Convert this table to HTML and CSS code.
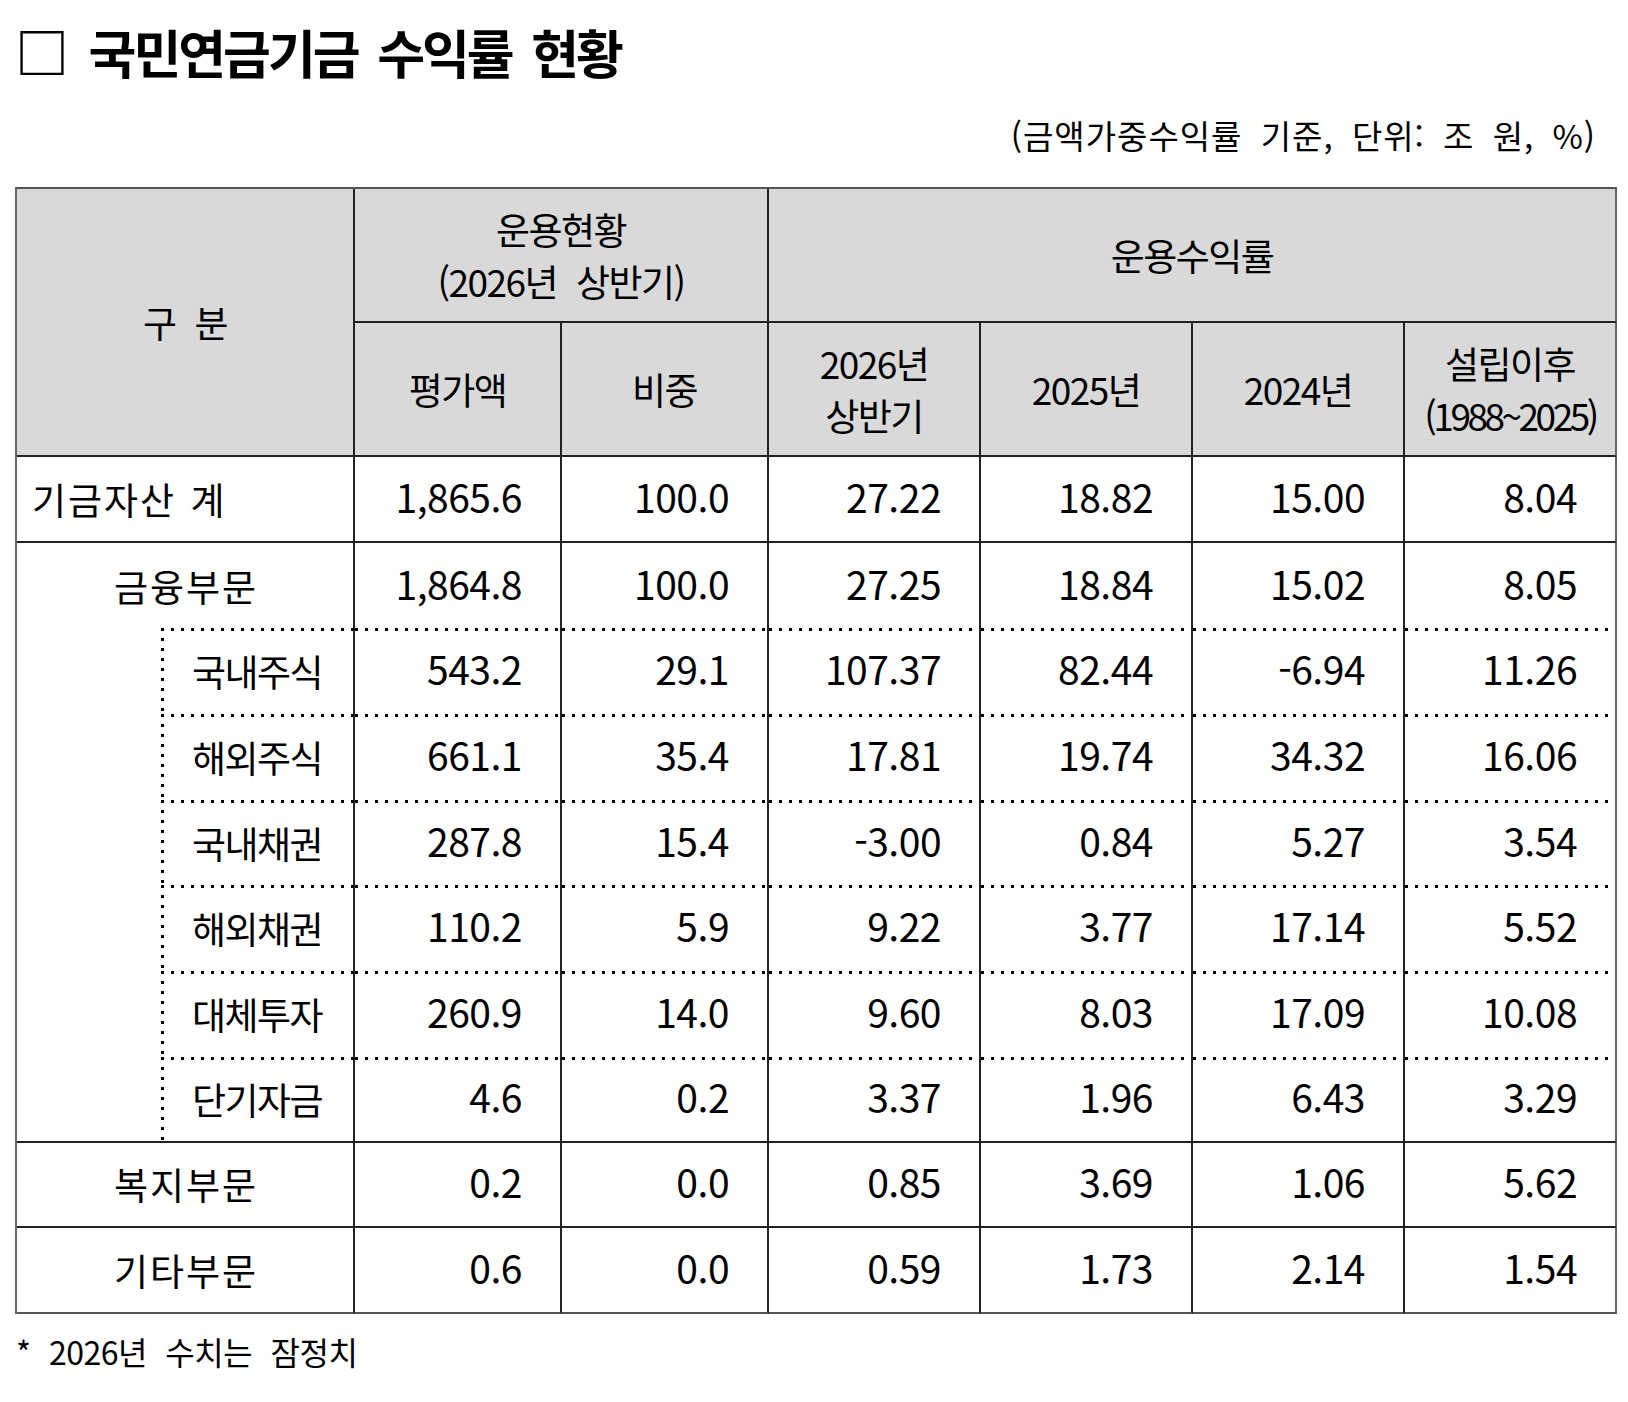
FILE: index.html
```html
<!DOCTYPE html>
<html lang="ko">
<head>
<meta charset="utf-8">
<title>국민연금기금 수익률 현황</title>
<link rel="stylesheet" href="styles.css">
</head>
<body>
<h1 class="title"><span class="box">□</span> 국민연금기금 수익률 현황</h1>
<p class="unit">(금액가중수익률 기준, 단위: 조 원, %)</p>
<table class="returns">
  <colgroup>
    <col class="c-indent">
    <col class="c-label">
    <col class="c-val">
    <col class="c-val">
    <col class="c-rate">
    <col class="c-rate">
    <col class="c-rate">
    <col class="c-rate">
  </colgroup>
  <thead>
    <tr class="h1row">
      <th colspan="2" rowspan="2">구 분</th>
      <th colspan="2">운용현황<br>(2026년 상반기)</th>
      <th colspan="4" class="last">운용수익률</th>
    </tr>
    <tr class="h2row">
      <th>평가액</th>
      <th>비중</th>
      <th>2026년<br>상반기</th>
      <th>2025년</th>
      <th>2024년</th>
      <th class="last">설립이후<br><span class="since">(1988~2025)</span></th>
    </tr>
  </thead>
  <tbody>
    <tr>
      <td colspan="2" class="lbl main left">기금자산 계</td>
      <td class="num">1,865.6</td><td class="num">100.0</td><td class="num">27.22</td><td class="num">18.82</td><td class="num">15.00</td><td class="num last">8.04</td>
    </tr>
    <tr class="open">
      <td colspan="2" class="lbl main">금융부문</td>
      <td class="num">1,864.8</td><td class="num">100.0</td><td class="num">27.25</td><td class="num">18.84</td><td class="num">15.02</td><td class="num last">8.05</td>
    </tr>
    <tr class="sub open">
      <td rowspan="6" class="indent"></td>
      <td class="lbl sublbl">국내주식</td>
      <td class="num">543.2</td><td class="num">29.1</td><td class="num">107.37</td><td class="num">82.44</td><td class="num">-6.94</td><td class="num last">11.26</td>
    </tr>
    <tr class="sub open">
      <td class="lbl sublbl">해외주식</td>
      <td class="num">661.1</td><td class="num">35.4</td><td class="num">17.81</td><td class="num">19.74</td><td class="num">34.32</td><td class="num last">16.06</td>
    </tr>
    <tr class="sub open">
      <td class="lbl sublbl">국내채권</td>
      <td class="num">287.8</td><td class="num">15.4</td><td class="num">-3.00</td><td class="num">0.84</td><td class="num">5.27</td><td class="num last">3.54</td>
    </tr>
    <tr class="sub open">
      <td class="lbl sublbl">해외채권</td>
      <td class="num">110.2</td><td class="num">5.9</td><td class="num">9.22</td><td class="num">3.77</td><td class="num">17.14</td><td class="num last">5.52</td>
    </tr>
    <tr class="sub open">
      <td class="lbl sublbl">대체투자</td>
      <td class="num">260.9</td><td class="num">14.0</td><td class="num">9.60</td><td class="num">8.03</td><td class="num">17.09</td><td class="num last">10.08</td>
    </tr>
    <tr class="sub">
      <td class="lbl sublbl">단기자금</td>
      <td class="num">4.6</td><td class="num">0.2</td><td class="num">3.37</td><td class="num">1.96</td><td class="num">6.43</td><td class="num last">3.29</td>
    </tr>
    <tr>
      <td colspan="2" class="lbl main">복지부문</td>
      <td class="num">0.2</td><td class="num">0.0</td><td class="num">0.85</td><td class="num">3.69</td><td class="num">1.06</td><td class="num last">5.62</td>
    </tr>
    <tr class="bottom">
      <td colspan="2" class="lbl main">기타부문</td>
      <td class="num">0.6</td><td class="num">0.0</td><td class="num">0.59</td><td class="num">1.73</td><td class="num">2.14</td><td class="num last">1.54</td>
    </tr>
  </tbody>
</table>
<p class="note">* 2026년 수치는 잠정치</p>
</body>
</html>
```
FILE: styles.css
```css
html, body {
  margin: 0;
  padding: 0;
  background: #ffffff;
}
body {
  padding: 0 15px;
  color: #000;
  font-family: "Noto Sans CJK KR", "Noto Sans", sans-serif;
}
.title {
  margin: 21px 0 0 0;
  padding-left: 0;
  height: 60px;
  line-height: 60px;
  font-size: 52px;
  font-weight: 700;
  letter-spacing: -3px;
  word-spacing: 8px;
  white-space: nowrap;
}
.title .box {
  font-weight: 700;
  font-size: 54px;
  letter-spacing: 0;
}
.unit {
  margin: 34px 0 0 0;
  height: 40px;
  line-height: 40px;
  text-align: right;
  padding-right: 17px;
  font-size: 33px;
  letter-spacing: 1px;
  word-spacing: 8px;
  white-space: nowrap;
}
.returns {
  margin-top: 32px;
  width: 1602px;
  table-layout: fixed;
  border-collapse: separate;
  border-spacing: 0;
  border-top: 2px solid #555;
  border-left: 2px solid #666;
}
.c-indent { width: 144px; }
.c-label { width: 194px; }
.c-val { width: 207px; }
.c-rate { width: 212px; }
.returns th,
.returns td {
  box-sizing: border-box;
  padding: 0;
  border-right: 2px solid #222;
  border-bottom: 2px solid #222;
  vertical-align: middle;
  white-space: nowrap;
}
.returns th {
  background: #d9d9d9;
  font-weight: 400;
  font-size: 37px;
  letter-spacing: -1.5px;
  word-spacing: 10px;
  line-height: 52px;
  text-align: center;
}
.returns .h1row th { height: 134px; }
.returns .h2row th { height: 134px; }
.returns .since { letter-spacing: -3.5px; }
.returns .last { border-right-color: #666; }
.returns tbody tr { height: 85.7px; }
.returns td {
  height: 85.7px;
  font-size: 37px;
  letter-spacing: -1.5px;
  word-spacing: 14px;
}
.returns .lbl { text-align: center; }
.returns .lbl.main { letter-spacing: 2px; padding-left: 2px; }
.returns .lbl.left { text-align: left; padding-left: 15px; word-spacing: 2px; }
.returns .num {
  text-align: right;
  padding-right: 38px;
  font-size: 39px;
  letter-spacing: -0.5px;
  padding-bottom: 6px;
}
.returns .open td { border-bottom: none; }
.returns .sub td.indent {
  border-right: none;
  border-bottom: 2px solid #222;
  background: none;
}
.returns .sub td {
  background-image: linear-gradient(to right, #000 0 3px, transparent 3px 10px);
  background-size: 10px 3px;
  background-repeat: repeat-x;
  background-position: 0 0;
}
.returns .sub td.sublbl {
  background-image:
    linear-gradient(to right, #000 0 3px, transparent 3px 10px),
    linear-gradient(to bottom, #000 0 3px, transparent 3px 10px);
  background-size: 10px 3px, 3px 10px;
  background-repeat: repeat-x, repeat-y;
  background-position: 0 0, 0 0;
}
.returns .bottom td { border-bottom-color: #555; }
.note {
  margin: 17px 0 0 0;
  padding-left: 1px;
  font-size: 32px;
  line-height: 40px;
  letter-spacing: -0.5px;
  word-spacing: 10px;
}
```
